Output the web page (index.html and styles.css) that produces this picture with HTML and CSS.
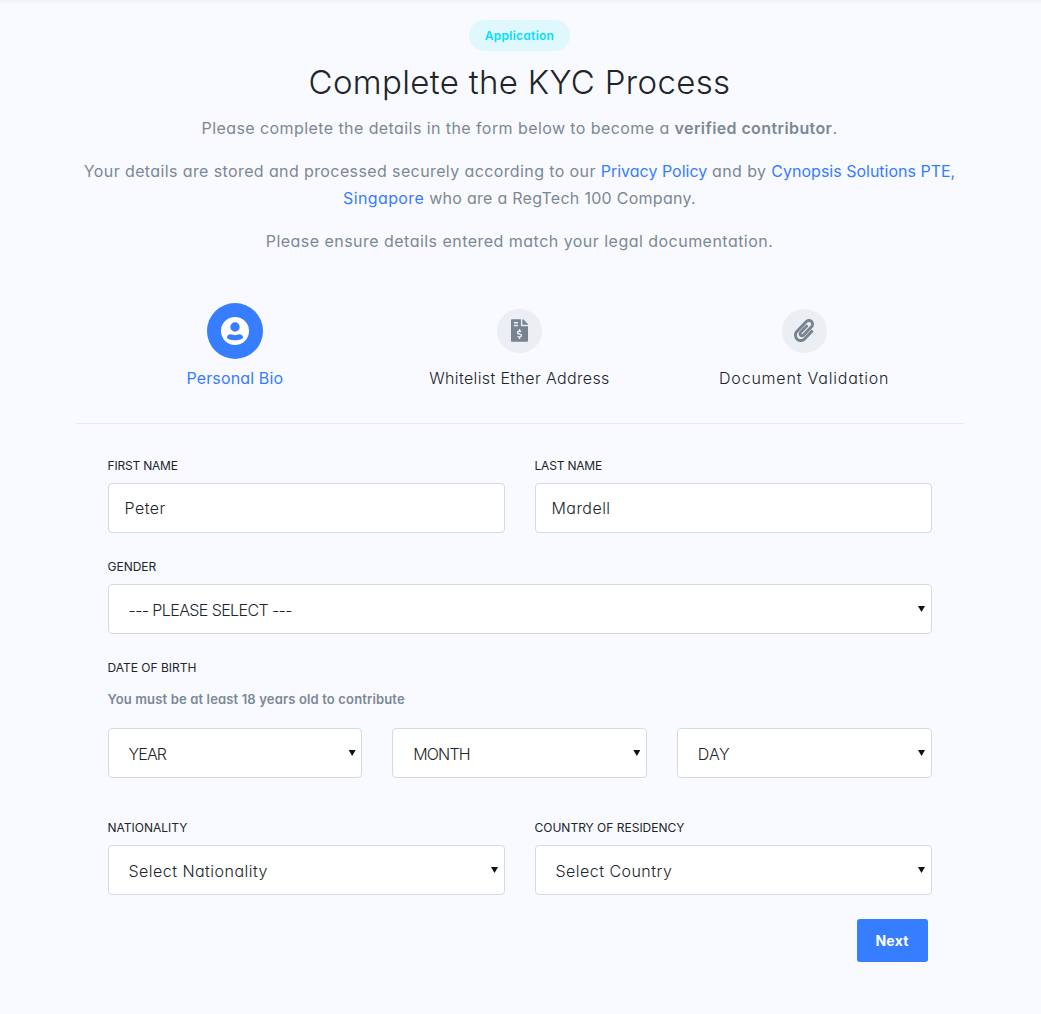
FILE: index.html
```html
<!DOCTYPE html>
<html lang="en">
<head>
<meta charset="utf-8">
<title>Complete the KYC Process</title>
<link rel="stylesheet" href="styles.css">
</head>
<body>
<main class="page">
  <header class="intro">
    <span class="badge">Application</span>
    <h1 class="title">Complete the KYC Process</h1>
    <p class="lead lead-first">Please complete the details in the form below to become a <strong>verified contributor</strong>.</p>
    <p class="lead lead-policy">Your details are stored and processed securely according to our <a class="tight" href="#">Privacy Policy</a> and by <a href="#"><span class="tight">Cynopsis Solutions PTE,</span><br>Singapore</a> <span class="company">who are a RegTech 100 Company.</span></p>
    <p class="lead">Please ensure details entered match your legal documentation.</p>
  </header>
  <nav class="steps">
    <div class="step active">
      <div class="step-top"><span class="step-icon">
        <svg width="28" height="28" viewBox="0 0 28 28"><path fill="currentColor" fill-rule="evenodd" d="M14 0a14 14 0 1 1 0 28a14 14 0 1 1 0-28zM14 5.3a4.7 4.7 0 1 0 0 9.4a4.7 4.7 0 1 0 0-9.4zM14 18.200C12.600 18.200 11.500 17.300 9.700 17.300C7.600 17.300 6 18.700 6 20.300C6 22.100 9.500 23.300 14 23.300C18.500 23.300 22 22.100 22 20.300C22 18.700 20.400 17.300 18.300 17.300C16.500 17.300 15.400 18.200 14 18.200z"/></svg>
      </span></div>
      <span class="step-name">Personal Bio</span>
    </div>
    <div class="step">
      <div class="step-top"><span class="step-icon">
        <svg width="17" height="23" viewBox="0 0 384 512"><path fill="currentColor" d="M377 105L279.100 7c-4.500-4.500-10.600-7-17-7H256v128h128v-6.100c0-6.300-2.500-12.400-7-16.900zm-153 31V0H24C10.700 0 0 10.700 0 24v464c0 13.300 10.700 24 24 24h336c13.300 0 24-10.700 24-24V160H248c-13.200 0-24-10.800-24-24zM64 72c0-4.420 3.580-8 8-8h80c4.420 0 8 3.580 8 8v16c0 4.420-3.580 8-8 8H72c-4.420 0-8-3.580-8-8V72zm0 80v-16c0-4.420 3.580-8 8-8h80c4.420 0 8 3.580 8 8v16c0 4.420-3.580 8-8 8H72c-4.420 0-8-3.580-8-8zm144 263.880V440c0 4.420-3.580 8-8 8h-16c-4.420 0-8-3.580-8-8v-24.290c-11.290-.58-22.270-4.520-31.370-11.350-3.900-2.930-4.100-8.770-.57-12.140l11.750-11.210c2.770-2.640 6.890-2.760 10.130-.73 3.870 2.420 8.260 3.720 12.820 3.720h28.110c6.500 0 11.800-5.920 11.800-13.190 0-5.950-3.610-11.190-8.770-12.730l-45-13.500c-18.590-5.580-31.580-23.420-31.580-43.390 0-24.520 19.050-44.440 42.670-45.070V232c0-4.420 3.580-8 8-8h16c4.420 0 8 3.580 8 8v24.290c11.290.58 22.270 4.510 31.370 11.350 3.900 2.930 4.100 8.770.57 12.140l-11.750 11.210c-2.770 2.640-6.890 2.760-10.130.73-3.870-2.430-8.260-3.720-12.820-3.720h-28.110c-6.500 0-11.800 5.920-11.800 13.190 0 5.950 3.610 11.190 8.770 12.730l45 13.500c18.590 5.580 31.580 23.420 31.580 43.390 0 24.530-19.050 44.440-42.670 45.070z"/></svg>
      </span></div>
      <span class="step-name s-ether">Whitelist Ether Address</span>
    </div>
    <div class="step">
      <div class="step-top"><span class="step-icon">
        <svg width="20" height="23" viewBox="0 0 448 512"><path fill="currentColor" d="M43.246 466.142c-58.430-60.289-57.341-157.511 1.386-217.581L254.392 34c44.316-45.332 116.351-45.336 160.671 0 43.890 44.894 43.943 117.329 0 162.276L232.214 383.128c-29.855 30.537-78.633 30.111-107.982-.998-28.275-29.970-27.368-77.473 1.452-106.953l143.743-146.835c6.182-6.314 16.312-6.422 22.626-.241l22.861 22.379c6.315 6.182 6.422 16.312.241 22.626L171.427 319.927c-4.932 5.045-5.236 13.428-.648 18.292 4.372 4.634 11.245 4.711 15.688.165l182.849-186.851c19.613-20.062 19.613-52.725-.011-72.798-19.189-19.627-49.957-19.637-69.154 0L90.390 293.295c-34.763 35.560-35.299 93.120-1.191 128.313 34.010 35.093 88.985 35.137 123.058.286l172.060-175.999c6.177-6.319 16.307-6.433 22.626-.256l22.877 22.364c6.319 6.177 6.434 16.307.256 22.626l-172.060 175.998c-59.576 60.938-155.943 60.216-214.770-.485z"/></svg>
      </span></div>
      <span class="step-name s-document">Document Validation</span>
    </div>
  </nav>
  <form class="form">
    <div class="row">
      <label class="field"><span class="label l-name">First Name</span><input class="control" value="Peter"></label>
      <label class="field"><span class="label l-name">Last Name</span><input class="control" value="Mardell"></label>
    </div>
    <div class="row">
      <label class="field"><span class="label">Gender</span><span class="select"><select class="control c-gender"><option>--- PLEASE SELECT ---</option></select></span></label>
    </div>
    <div class="birth">
      <span class="label">Date of Birth</span>
      <p class="hint">You must be at least 18 years old to contribute</p>
      <div class="row">
        <span class="select"><select class="control c-year"><option>YEAR</option></select></span>
        <span class="select"><select class="control c-month"><option>MONTH</option></select></span>
        <span class="select"><select class="control c-day"><option>DAY</option></select></span>
      </div>
    </div>
    <div class="row">
      <label class="field"><span class="label">Nationality</span><span class="select"><select class="control"><option>Select Nationality</option></select></span></label>
      <label class="field"><span class="label">Country of Residency</span><span class="select"><select class="control"><option>Select Country</option></select></span></label>
    </div>
    <div class="actions"><button class="next" type="button">Next</button></div>
  </form>
</main>
</body>
</html>
```
FILE: styles.css
```css
* { box-sizing: border-box; }
body {
  margin: 0;
  min-height: 1014px;
  background: linear-gradient(#f0f2f6, #f9faff 5px) #f9faff;
  color: #212529;
  font: 300 16px/27px Inter, sans-serif;
  font-feature-settings: "cv11";
}
.page { width: 888px; margin: 0 0 0 75.5px; padding-top: 20px; }
.intro { display: flex; flex-direction: column; align-items: center; text-align: center; }
.badge {
  width: 101px; height: 31px; border-radius: 16px;
  background: #dff8fe; color: #00dffc;
  font-size: 12px; font-weight: 600; line-height: 31px; letter-spacing: 0.27px;
}
.title { margin: 9px 0 1px; font-size: 33px; font-weight: 300; line-height: 44px; letter-spacing: 0.35px; }
.lead { margin: 0 0 16px; color: #7c8894; font-weight: 400; letter-spacing: 0.47px; white-space: nowrap; }
.lead-first { margin-top: 10px; letter-spacing: 0.42px; }
.lead-policy { letter-spacing: 0.39px; }
.lead strong { font-weight: 600; letter-spacing: 0.4px; }
.tight { letter-spacing: 0; }
.company { letter-spacing: 0.28px; }
a { color: #377dff; text-decoration: none; }
.steps {
  display: grid; grid-template-columns: repeat(3, 1fr);
  height: 137px; margin-top: 16px; padding: 16px 17px 0;
  border-bottom: 1px solid #e7eaf3;
}
.step { display: flex; flex-direction: column; align-items: center; }
.step-top { display: flex; align-items: center; height: 56px; }
.step-icon {
  display: flex; align-items: center; justify-content: center;
  width: 44.8px; height: 44.8px; border-radius: 50%;
  background: #ebeef2; color: #77838f;
}
.active .step-icon { width: 56px; height: 56px; background: #377dff; color: #fff; }
.step-name { margin-top: 6px; letter-spacing: 0.15px; }
.s-ether { letter-spacing: 0.37px; }
.s-document { letter-spacing: 0.8px; }
.active .step-name { color: #377dff; font-weight: 400; }
.form { padding: 32px 32px 0; }
.row { display: flex; gap: 30px; }
.form > .row { margin-bottom: 24px; }
.field, .row > .select { flex: 1; display: block; min-width: 0; }
.label { display: block; height: 27px; line-height: 20px; font-size: 12px; font-weight: 400; text-transform: uppercase; }
.l-name { letter-spacing: -0.2px; }
.control {
  display: block; width: 100%; height: 50px; padding: 0 16px;
  border: 1px solid #d5d9e2; border-radius: 4px; background: #fff;
  color: #212529; font: inherit; font-feature-settings: inherit;
  letter-spacing: 0.45px; appearance: none;
}
.select { display: block; position: relative; }
.select .control { padding: 2px 20px 0; letter-spacing: 0.47px; }
.select .c-gender { letter-spacing: -0.6px; }
.select .c-year { letter-spacing: -0.9px; }
.select .c-month { letter-spacing: -0.8px; }
.select .c-day { letter-spacing: 0.2px; }
.select::after {
  content: ""; position: absolute; right: 6.5px; top: 22px;
  width: 7px; height: 6px; background: #111; clip-path: polygon(0 0, 100% 0, 50% 100%);
}
.hint { margin: 3px 0 17px; font-size: 13px; font-weight: 600; line-height: 23px; letter-spacing: 0.15px; color: #7c8894; }
.birth { margin-bottom: 40px; }
.actions { display: flex; justify-content: flex-end; padding-right: 4px; }
.next {
  width: 71px; height: 43px; border: 0; border-radius: 3px;
  background: #377dff; color: #fff; font: 700 14px Inter, sans-serif; letter-spacing: 0.2px;
}
```
